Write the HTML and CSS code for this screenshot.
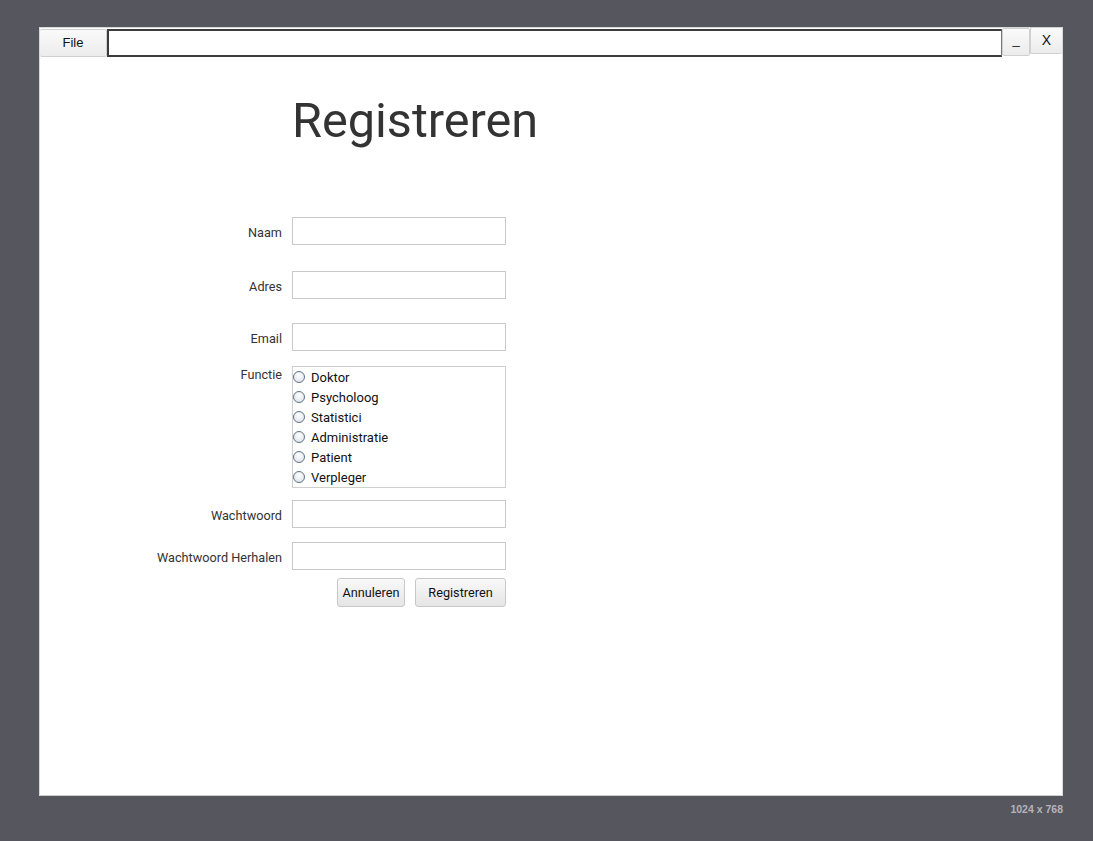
FILE: index.html
```html
<!DOCTYPE html>
<html lang="nl">
<head>
<meta charset="utf-8">
<title>Registreren</title>
<link rel="stylesheet" href="styles.css">
</head>
<body>
<div class="stage">
  <div class="window">
    <div class="topbar">
      <button class="tb-btn file-btn">File</button>
      <div class="tb-field"></div>
      <button class="tb-btn min-btn">_</button>
      <button class="tb-btn close-btn">X</button>
    </div>
    <div class="content">
      <div class="row title-row">
        <div class="label"></div>
        <h1 class="title">Registreren</h1>
      </div>
      <div class="row r-naam">
        <div class="label">Naam</div>
        <div class="input"></div>
      </div>
      <div class="row r-adres">
        <div class="label">Adres</div>
        <div class="input"></div>
      </div>
      <div class="row r-email">
        <div class="label">Email</div>
        <div class="input"></div>
      </div>
      <div class="row top r-functie">
        <div class="label label-top">Functie</div>
        <div class="radio-box">
          <div class="radio"><span class="dot"></span>Doktor</div>
          <div class="radio"><span class="dot"></span>Psycholoog</div>
          <div class="radio"><span class="dot"></span>Statistici</div>
          <div class="radio"><span class="dot"></span>Administratie</div>
          <div class="radio"><span class="dot"></span>Patient</div>
          <div class="radio"><span class="dot"></span>Verpleger</div>
        </div>
      </div>
      <div class="row r-ww">
        <div class="label">Wachtwoord</div>
        <div class="input"></div>
      </div>
      <div class="row r-ww2">
        <div class="label">Wachtwoord Herhalen</div>
        <div class="input"></div>
      </div>
      <div class="row r-btns">
        <div class="label"></div>
        <div class="buttons">
          <button class="btn btn-cancel">Annuleren</button>
          <button class="btn btn-reg">Registreren</button>
        </div>
      </div>
    </div>
  </div>
  <div class="size-note">1024 x 768</div>
</div>
</body>
</html>
```
FILE: styles.css
```css
html, body {
  margin: 0;
  padding: 0;
}
body {
  background: #56565e;
  font-family: Roboto, "Liberation Sans", sans-serif;
  width: 1093px;
  height: 841px;
  overflow: hidden;
}
.stage {
  padding: 27px 0 0 39px;
  width: 1024px;
}
.window {
  width: 1022px;
  height: 767px;
  background: #ffffff;
  border: 1px solid #d8d8d8;
  border-bottom: 1px solid #cfcfcf;
  display: flex;
  flex-direction: column;
}
.topbar {
  display: flex;
  align-items: flex-start;
  height: 28px;
}
.tb-btn {
  font-family: "Liberation Sans", Arial, sans-serif;
  font-size: 13px;
  color: #111;
  background: linear-gradient(#fafafa, #ececec);
  border: 1px solid #d0d0d0;
  border-radius: 2px;
  padding: 0;
  margin: 0;
  box-sizing: border-box;
}
.file-btn {
  width: 67px;
  height: 28px;
  margin-top: 1px;
  border-left: none;
  padding-bottom: 1px;
}
.tb-field {
  width: 895px;
  height: 28px;
  margin-top: 1px;
  box-sizing: border-box;
  border: 2px solid #3c3c3c;
  border-right: 1px solid #777;
  background: #fff;
}
.min-btn {
  width: 28px;
  height: 28px;
  margin-top: 0;
  padding-bottom: 5px;
}
.close-btn {
  width: 32px;
  height: 27px;
  margin-top: -1px;
  border-right: none;
  font-size: 14px;
  padding-bottom: 1px;
}
.content {
  display: flex;
  flex-direction: column;
}
.row {
  display: flex;
  align-items: center;
}
.row.top {
  align-items: flex-start;
}
.label {
  width: 252px;
  flex: none;
  box-sizing: border-box;
  padding-right: 10px;
  padding-top: 2px;
  text-align: right;
  font-size: 12.7px;
  color: #333;
}
.row .label-top {
  padding-top: 1px;
}
.title {
  margin: 0;
  font-family: Roboto, "Liberation Sans", sans-serif;
  font-weight: 400;
  font-size: 48.6px;
  line-height: 56px;
  color: #333;
}
.title-row {
  margin-top: 37px;
}
.input {
  width: 214px;
  height: 28px;
  box-sizing: border-box;
  border: 1px solid #c9c9c9;
  background: #fff;
}
.r-naam { margin-top: 68px; }
.r-adres { margin-top: 26px; }
.r-email { margin-top: 24px; }
.r-functie { margin-top: 15px; }
.r-ww { margin-top: 12px; }
.r-ww2 { margin-top: 14px; }
.r-btns { margin-top: 8px; }
.radio-box {
  width: 214px;
  box-sizing: border-box;
  border: 1px solid #cfcfcf;
  display: flex;
  flex-direction: column;
}
.radio {
  height: 20px;
  display: flex;
  align-items: center;
  font-family: Roboto, "Liberation Sans", sans-serif;
  font-size: 13px;
  color: #111;
  padding-top: 1px;
  box-sizing: border-box;
}
.dot {
  width: 10px;
  height: 10px;
  border: 1px solid #5f7388;
  border-radius: 50%;
  background: radial-gradient(circle at 50% 35%, #ffffff, #d8dde4);
  margin: -2px 6px 0 0;
  flex: none;
}
.buttons {
  width: 214px;
  display: flex;
  justify-content: flex-end;
  gap: 10px;
}
.btn {
  height: 29px;
  box-sizing: border-box;
  font-family: Roboto, "Liberation Sans", sans-serif;
  font-size: 12.7px;
  color: #111;
  background: linear-gradient(#f9f9f9, #e5e5e5);
  border: 1px solid #c8c8c8;
  border-radius: 3px;
  padding: 0;
}
.btn-cancel { width: 68px; }
.btn-reg { width: 91px; }
.size-note {
  text-align: right;
  font-family: "Liberation Sans", Arial, sans-serif;
  font-weight: bold;
  font-size: 10.5px;
  color: #b4b4ba;
  padding-top: 7px;
  width: 1024px;
}
```
